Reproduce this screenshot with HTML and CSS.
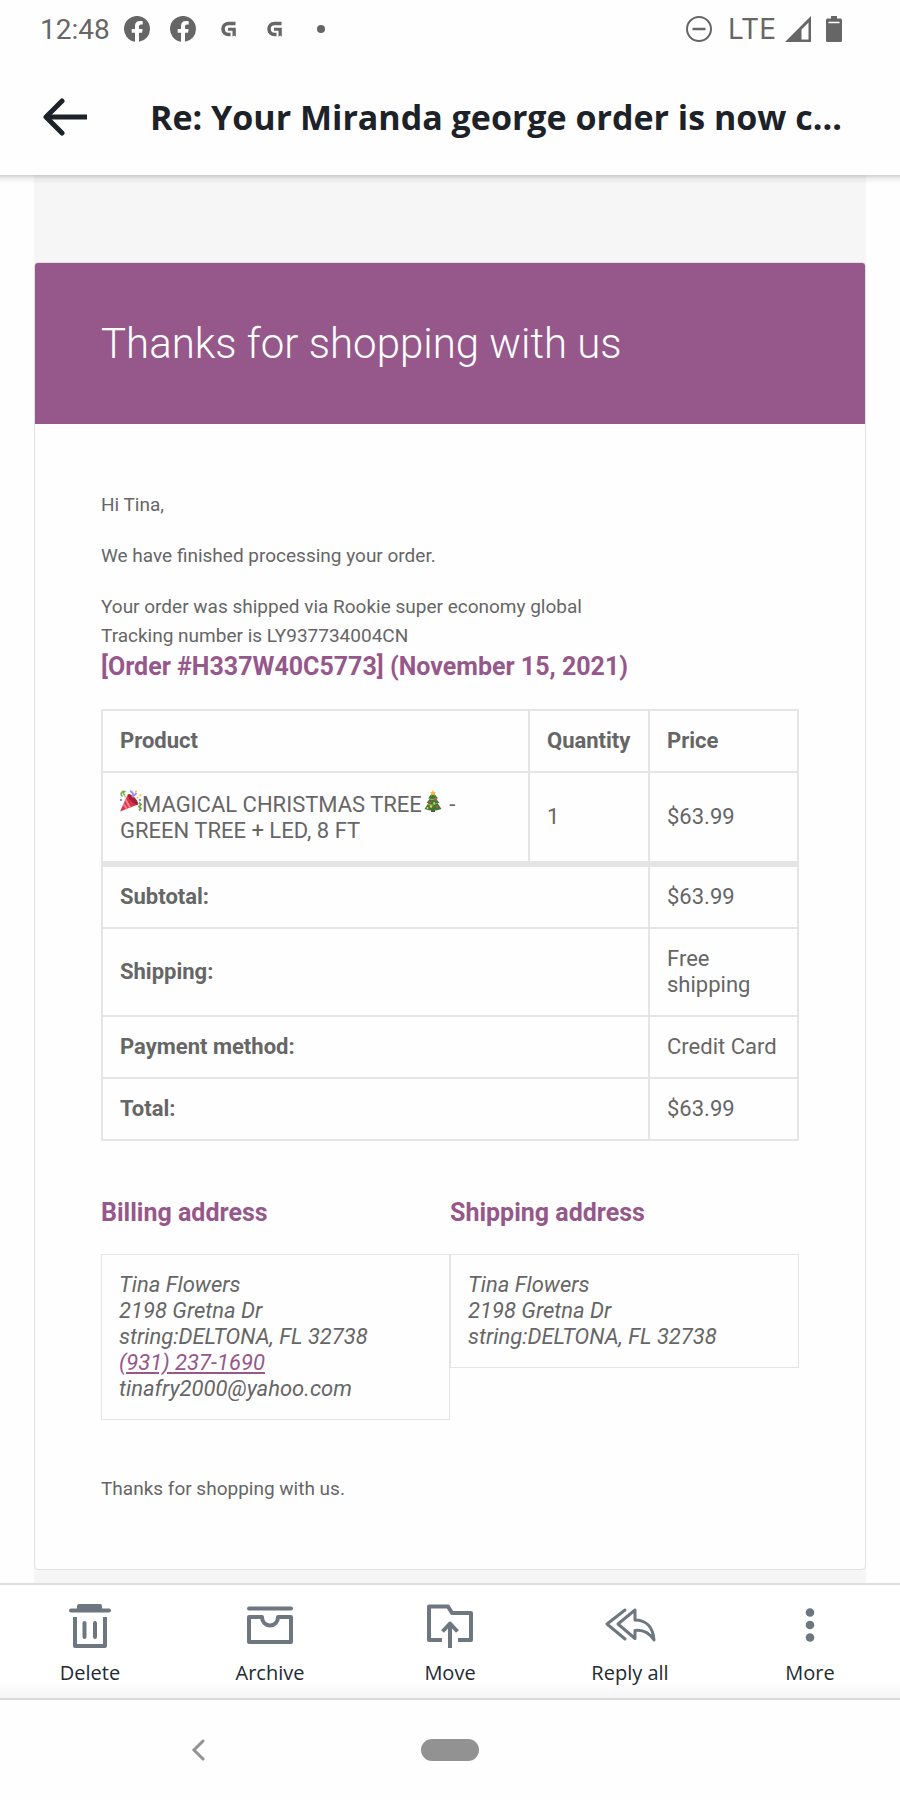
FILE: index.html
```html
<!DOCTYPE html>
<html lang="en">
<head>
<meta charset="utf-8">
<meta name="viewport" content="width=device-width, initial-scale=1">
<title>Re: Your Miranda george order is now complete</title>
<link rel="stylesheet" href="styles.css">
</head>
<body>
<svg class="defs" aria-hidden="true">
  <symbol id="fb" viewBox="0 0 26 26"><path d="M26 13A13 13 0 1 0 11 25.8V16.700H7.700V13H11v-2.900C11 6.900 12.900 5.100 15.800 5.100c1.400 0 2.900.3 2.900.3v3.200h-1.600c-1.600 0-2.100 1-2.100 2V13h3.600l-.6 3.700h-3v9.100A13 13 0 0 0 26 13z" fill="currentColor"/></symbol>
  <symbol id="gmark" viewBox="0 0 26 26"><path d="M19.500 7.500H12.500a5.500 5.500 0 0 0 0 11H14.500" fill="none" stroke="currentColor" stroke-width="3.600"/><path d="M12 11.800h7.800v9l-1.600-1.300-1.700 1.300v-6H12z" fill="currentColor"/></symbol>
</svg>

<div class="status">
  <span class="clock">12:48</span>
  <div class="notifications">
    <svg class="icon"><use href="#fb"/></svg>
    <svg class="icon"><use href="#fb"/></svg>
    <svg class="icon"><use href="#gmark"/></svg>
    <svg class="icon"><use href="#gmark"/></svg>
    <svg class="icon" viewBox="0 0 26 26"><circle cx="13" cy="13" r="4" fill="currentColor"/></svg>
  </div>
  <div class="system">
    <svg class="icon" viewBox="0 0 26 26" fill="none" stroke="currentColor" stroke-width="2"><circle cx="13" cy="13" r="12"/><path d="M6.500 13h13" stroke-width="2.500"/></svg>
    <span class="network">LTE</span>
    <svg class="icon signal" viewBox="0 0 26 26"><path fill="currentColor" fill-rule="evenodd" d="M26 0v26H0zM23.500 6.500l-7 7v10h7z"/></svg>
    <svg class="battery" viewBox="0 0 16 26"><path fill="currentColor" d="M5 0h6v2.500h3.500Q16 2.500 16 4v20.500q0 1.500-1.500 1.500h-13Q0 26 0 24.500V4q0-1.500 1.500-1.500H5z"/><path stroke="#fff" stroke-width="1.500" d="M2.500 6.500h11"/></svg>
  </div>
</div>

<header class="header">
  <button class="back" type="button" aria-label="Back"><svg viewBox="0 0 46 38" fill="none" stroke="currentColor" stroke-width="5"><path d="M3 19h42"/><path d="M20 3L4 19l16 16" stroke-linecap="round" stroke-linejoin="round"/></svg></button>
  <h1 class="title">Re: Your Miranda george order is now c...</h1>
</header>

<main class="mail">
  <article class="card">
    <h2 class="banner">Thanks for shopping with us</h2>
    <div class="content">
      <p>Hi Tina,</p>
      <p>We have finished processing your order.</p>
      <p class="shipped">Your order was shipped via Rookie super economy global<br>Tracking number is LY937734004CN</p>
      <h3 class="heading order-id">[Order #H337W40C5773] (November 15, 2021)</h3>
      <table class="order">
        <colgroup><col><col class="col-quantity"><col class="col-price"></colgroup>
        <thead>
          <tr><th scope="col">Product</th><th scope="col">Quantity</th><th scope="col">Price</th></tr>
        </thead>
        <tbody>
          <tr>
            <td><svg class="emoji" viewBox="0 0 22 22" role="img" aria-label="party popper"><path d="M8 4L18 14.500 0 21.500z" fill="#dc3348"/><path d="M5.500 9.500L10 17.500M3.500 14l3.500 5" stroke="#f0828e" stroke-width="2"/><ellipse cx="13" cy="9.500" rx="2.500" ry="7" transform="rotate(-43 13 9.500)" fill="#a61f36"/><path d="M2.500 6.500C-.5 4 2 .8 4.500 1.500c-2 1.500-.5 3 .5 4" fill="none" stroke="#7aac55" stroke-width="1.600"/><path d="M10 1c3 1 3.500 3 2.500 6l4-4" fill="none" stroke="#a291e8" stroke-width="2"/><path d="M19 12.500l2 2-2 2 2 2-2 2" fill="none" stroke="#6da84f" stroke-width="1.800"/><g fill="#f3bd3f"><circle cx="17.500" cy="7.500" r="1"/><circle cx="16" cy="1.500" r="1"/><circle cx="20.500" cy="5" r="1"/><circle cx="5" cy="6.500" r="1"/></g><circle cx="20" cy="10" r="1.200" fill="#987fd8"/><circle cx="1" cy="10" r="1.200" fill="#8f82e8"/></svg>MAGICAL CHRISTMAS TREE<svg class="emoji" viewBox="0 0 22 22" role="img" aria-label="Christmas tree"><path d="M9 18h4v4H9z" fill="#714331"/><path d="M11 2L6 8.500h2L4.500 13h2L2.500 19q8.500 3 17 0l-4-6h2L14 8.500h2z" fill="#397a39"/><path d="M7.500 9q4 1.500 6-1M6 14.500q5 2 9.500-1.500" fill="none" stroke="#8dbb4c" stroke-width="1"/><path d="M11 0l1 2 2 .3-1.500 1.400.4 2L11 4.700 9.100 5.700l.4-2L8 2.300 10 2z" fill="#f6b545"/><g fill="#d34a43"><circle cx="13.500" cy="9.500" r="1.500"/><circle cx="8" cy="12" r="1.300"/><circle cx="15" cy="16.500" r="1.300"/></g><g fill="#f0cf4d"><circle cx="9" cy="16.500" r="1.300"/><circle cx="5.500" cy="18" r="1"/><circle cx="12" cy="13" r="1"/></g></svg><span> - </span><span>GREEN TREE + LED, 8 FT</span></td>
            <td>1</td>
            <td>$63.99</td>
          </tr>
        </tbody>
        <tfoot>
          <tr><th scope="row" colspan="2">Subtotal:</th><td>$63.99</td></tr>
          <tr><th scope="row" colspan="2">Shipping:</th><td>Free shipping</td></tr>
          <tr><th scope="row" colspan="2">Payment method:</th><td>Credit Card</td></tr>
          <tr><th scope="row" colspan="2">Total:</th><td>$63.99</td></tr>
        </tfoot>
      </table>
      <div class="addresses">
        <section>
          <h3 class="heading">Billing address</h3>
          <address class="address">Tina Flowers<br>2198 Gretna Dr<br>string:DELTONA, FL 32738<br><a href="tel:+19312371690">(931) 237-1690</a><br>tinafry2000@yahoo.com</address>
        </section>
        <section>
          <h3 class="heading">Shipping address</h3>
          <address class="address">Tina Flowers<br>2198 Gretna Dr<br>string:DELTONA, FL 32738</address>
        </section>
      </div>
      <p class="closing">Thanks for shopping with us.</p>
    </div>
  </article>
</main>

<div class="toolbar">
  <button type="button" class="tool"><svg viewBox="0 0 52 48" fill="none" stroke="currentColor" stroke-width="4"><path d="M7 8.500h38" stroke-linecap="round"/><path d="M13 8V4q0-2 2-2h21q2 0 2 2v4z" fill="currentColor" stroke="none"/><path d="M11 15v29h30V15" stroke-linejoin="round"/><path d="M20.500 21v14M31 21v14" stroke-linecap="round"/></svg>Delete</button>
  <button type="button" class="tool"><svg viewBox="0 0 52 48" fill="none" stroke="currentColor" stroke-width="4" stroke-linejoin="round"><path d="M5 6.500h42" stroke-linecap="round"/><path d="M5 15h13c0 5 3.500 8.500 8 8.500s8-3.500 8-8.500h13v25H5z"/></svg>Archive</button>
  <button type="button" class="tool"><svg viewBox="0 0 52 48" fill="none" stroke="currentColor" stroke-width="4" stroke-linejoin="round"><path d="M18 38H5V4.500h19l4 6.500h19v27H34"/><path d="M26 46V21M18.500 29.500L26 21.500l7.500 8"/></svg>Move</button>
  <button type="button" class="tool"><svg viewBox="0 0 52 48" fill="none" stroke="currentColor" stroke-width="3" stroke-linejoin="round" stroke-linecap="round"><path d="M21 8L3 22l18 15"/><path d="M31 8L14 22l17 14.500V28.500c8-1 14 2 19 9.500-1-13-8-20-19-20z"/></svg>Reply all</button>
  <button type="button" class="tool"><svg viewBox="0 0 52 48" fill="currentColor"><circle cx="26" cy="10.500" r="4.300"/><circle cx="26" cy="23" r="4.300"/><circle cx="26" cy="35.500" r="4.300"/></svg>More</button>
</div>

<nav class="system-nav" aria-label="System">
  <button type="button" class="nav-back" aria-label="System back"><svg viewBox="0 0 14 22" fill="none" stroke="currentColor" stroke-width="3" stroke-linecap="round"><path d="M12 2L3 11l9 9"/></svg></button>
  <button type="button" class="nav-home" aria-label="Home"></button>
</nav>
</body>
</html>
```
FILE: styles.css
```css
* { box-sizing: border-box; }

body {
  margin: 0;
  min-height: 100vh;
  display: flex;
  flex-direction: column;
  background: #fefefe;
  color: #666;
  font-family: Roboto, "Liberation Sans", sans-serif;
  font-size: 19px;
}

h1, h2, h3, p { margin: 0; }

button {
  padding: 0;
  border: 0;
  background: none;
  font: inherit;
  color: inherit;
}

svg { display: block; }

.defs {
  position: absolute;
  width: 0;
  height: 0;
}

.status {
  height: 58px;
  padding: 0 58px 0 40px;
  display: flex;
  align-items: center;
  color: #666;
  font-size: 28px;
}

.notifications {
  display: flex;
  gap: 20px;
  margin-left: 14px;
}

.system {
  display: flex;
  align-items: center;
  margin-left: auto;
}

.icon { width: 26px; height: 26px; }

.network {
  margin: 0 9px 0 16px;
  font-family: Inter, Roboto, sans-serif;
  font-size: 28px;
}

.signal { margin-right: 15px; }
.battery { width: 16px; height: 26px; }

.header {
  height: 117px;
  padding: 0 40px 0 42px;
  display: flex;
  align-items: center;
  gap: 62px;
  color: #1d2228;
}

.back svg { width: 46px; height: 38px; }

.title {
  overflow: hidden;
  white-space: nowrap;
  font-family: "Open Sans", "Noto Sans", sans-serif;
  font-size: 34px;
  font-weight: 700;
}

.mail {
  flex: 1;
  padding: 87px 34px 12px;
  background:
    linear-gradient(rgba(0, 0, 0, .18), rgba(0, 0, 0, .05) 4px, transparent 9px),
    linear-gradient(90deg, transparent 34px, #f6f6f6 34px, #f6f6f6 calc(100% - 34px), transparent calc(100% - 34px));
}

.card {
  overflow: hidden;
  border: 1px solid #e2e0e2;
  border-radius: 4px;
  background: #fefefe;
}

.banner {
  padding: 50px 66px;
  background: #96588a;
  color: #fff;
  font-size: 42px;
  font-weight: 300;
  line-height: 61px;
}

.content { padding: 66px 66px 44px; }

.content p {
  margin-bottom: 22px;
  line-height: 29px;
}

.content .shipped { margin-bottom: 0; }

.heading {
  color: #96588a;
  font-size: 25px;
  font-weight: 700;
  line-height: 34px;
}

.order-id { margin-bottom: 25px; }

.order {
  width: 100%;
  border: 2px solid #e5e5e5;
  border-collapse: collapse;
  font-size: 22px;
  line-height: 26px;
}

.order th,
.order td {
  padding: 17px;
  border: 2px solid #e5e5e5;
  text-align: left;
}

.order tfoot tr:first-child > * { border-top-width: 6px; }

.col-quantity { width: 120px; }
.col-price { width: 149px; }

.emoji {
  display: inline-block;
  width: 22px;
  height: 22px;
  vertical-align: baseline;
}

.addresses {
  margin: 55px 0 54px;
  display: grid;
  grid-template-columns: 1fr 1fr;
  align-items: start;
}

.address {
  margin-top: 24px;
  padding: 17px;
  border: 1px solid #e5e5e5;
  font-size: 22px;
  line-height: 26px;
}

.address a { color: #96588a; }

.toolbar {
  padding: 17px 0 12px;
  display: grid;
  grid-template-columns: repeat(5, 1fr);
  border-top: 2px solid #dcdfe2;
  border-bottom: 2px solid #d8dadc;
  background: linear-gradient(#fff 85%, #f5f5f6);
}

.tool {
  display: flex;
  flex-direction: column;
  align-items: center;
  gap: 10px;
  color: #232a31;
  font-family: "Open Sans", "Noto Sans", sans-serif;
  font-size: 20px;
  line-height: 26px;
}

.tool svg {
  width: 52px;
  height: 48px;
  color: #6e7780;
}

.system-nav {
  height: 100px;
  display: grid;
  grid-template-columns: 44% 1fr 44%;
  place-items: center;
  color: #929292;
}

.nav-back svg { width: 14px; height: 22px; }

.nav-home {
  width: 58px;
  height: 22px;
  border-radius: 11px;
  background: #929292;
}
```
